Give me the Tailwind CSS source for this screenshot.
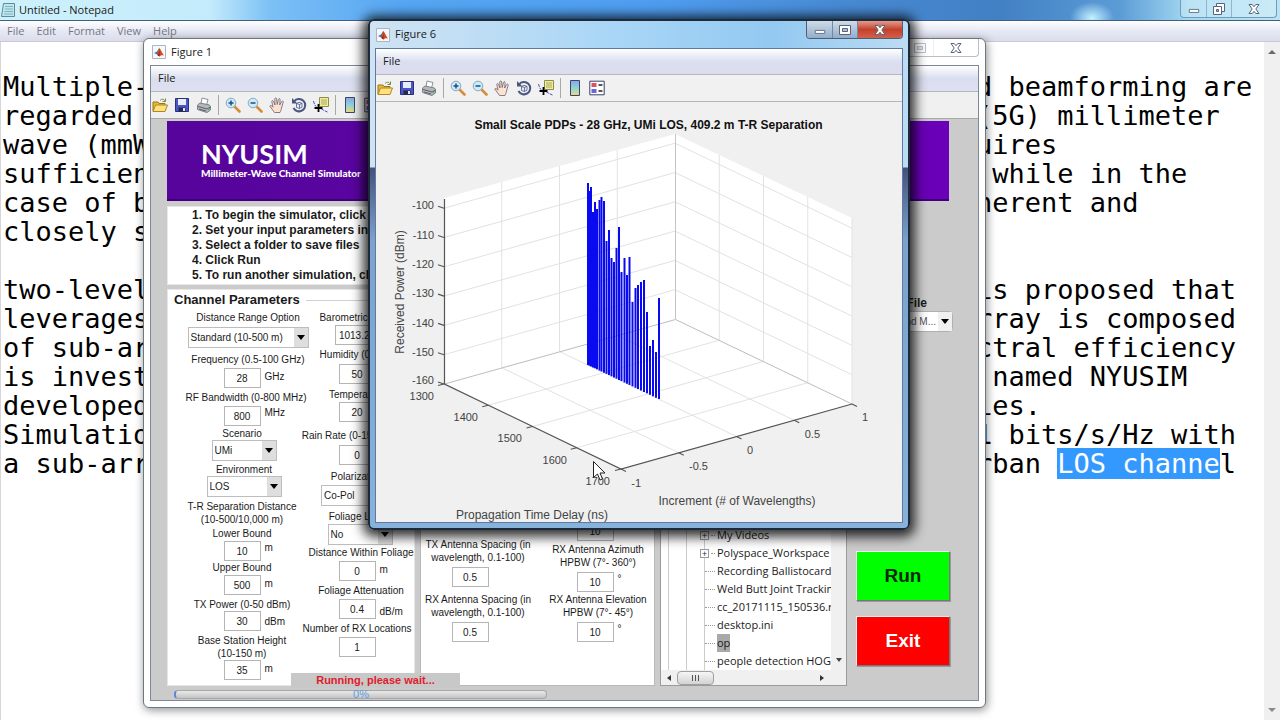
<!DOCTYPE html>
<html lang="en">
<head>
<meta charset="utf-8">
<title>Untitled - Notepad</title>
<script src="https://cdn.jsdelivr.net/npm/@tailwindcss/browser@4"></script>
</head>
<body class="h-screen overflow-hidden bg-white font-['Open_Sans',sans-serif] text-[11px] text-[#1a1a1a]">

<svg class="absolute size-0" aria-hidden="true">
  <symbol id="i-matlab" viewBox="0 0 14 14"><path d="M.5.5h13v13H.5z" fill="#f6f8fb" stroke="#a9b4c4"/><path d="M2 8l3-1.500 2.500-4L6 10z" fill="#3b77b5"/><path d="M5 9l2.500-6c1 1 2.500 5 4.500 7.500-2-.5-3-.5-4.500 1z" fill="#d8481c"/><path d="M7.500 3c0 3-.5 6-2 7.500l2 1z" fill="#8f2412"/></symbol>
  <symbol id="i-open" viewBox="0 0 16 16"><path d="M1 5h5l1 1.500h6V14H1z" fill="#e9b93c" stroke="#9c7418"/><path d="M3.500 8h12L13 14.500H1z" fill="#ffe27d" stroke="#b08620"/><path d="M8 3.500c2-2 4-1.500 5 .5M13.500 1.500v3h-3" fill="none" stroke="#6f8a4a"/></symbol>
  <symbol id="i-save" viewBox="0 0 16 16"><path d="M1.500 1.500h13v13h-13z" fill="#4b55c4" stroke="#2a2f80"/><path d="M4 2h8v6H4z" fill="#e6ecfa"/><path d="M4.500 10.500h7v4h-7z" fill="#23284f"/><path d="M9 11h2v3H9z" fill="#dfe3f4"/></symbol>
  <symbol id="i-print" viewBox="0 0 16 16"><path d="M5 7l1-6 6 1.500L10.500 8z" fill="#fff" stroke="#8b9097"/><path d="M1.500 8L4 6l9.500 2 1 2v3L11 15.500 1.500 12.500z" fill="#b4b8bd" stroke="#7d8288"/><path d="M2 9.500l9 2.500 3.500-2M3 12l7 2" fill="none" stroke="#5a5f65"/><path d="M12 12.500l1.500-1" stroke="#4fa548" stroke-width="1.500"/></symbol>
  <symbol id="i-in" viewBox="0 0 16 16"><path d="M9.500 9.500l5 5" stroke="#d98b3c" stroke-width="2.600" stroke-linecap="round"/><circle cx="6" cy="6" r="4.800" fill="#cdeaf8" stroke="#8aa9c0"/><path d="M3.500 6h5M6 3.500v5" stroke="#1d4f83" stroke-width="1.500"/></symbol>
  <symbol id="i-out" viewBox="0 0 16 16"><path d="M9.500 9.500l5 5" stroke="#d98b3c" stroke-width="2.600" stroke-linecap="round"/><circle cx="6" cy="6" r="4.800" fill="#cdeaf8" stroke="#8aa9c0"/><path d="M3.500 6h5" stroke="#1d4f83" stroke-width="1.500"/></symbol>
  <symbol id="i-hand" viewBox="0 0 16 16"><path d="M5.500 15.500C4 13 2 11 .8 9.200c.2-1.200 1.600-.9 3.200 1L2.800 4.500c.2-1.300 1.500-1.100 1.800 0L6 8 5.800 1.800c.3-1.200 1.600-1.200 1.800 0L8.200 7.500l1.300-5.300c.5-1 1.700-.7 1.600.4L10.700 8l2-3.600c.8-.8 1.700-.2 1.500.8L12.500 11c-.3 2-.8 3-1.500 4.500z" fill="#fbe3d0" stroke="#6b5f72" stroke-width=".8"/></symbol>
  <symbol id="i-rot" viewBox="0 0 16 16"><path d="M3 4.500A6.200 6.200 0 1 1 2.500 11" fill="none" stroke="#4a5680" stroke-width="2"/><path d="M1 1v5.500h5.500z" fill="#4a5680"/><path d="M5.500 6.500L8 5.300l3 1v3.800L8.500 11.500l-3-1zM5.500 6.500l3 1v4M8.500 7.500l2.500-1.200" fill="#e8ecf6" stroke="#4a578a" stroke-width=".8"/></symbol>
  <symbol id="i-cur" viewBox="0 0 16 16"><path d="M6.500.5h9v9h-9z" fill="#f0ee9c" stroke="#8f8d4c"/><path d="M8 3h6M8 5h6M8 7h6" stroke="#97955c" stroke-width=".8"/><path d="M.5 4c1 4 2 6 5 7 3 .5 5 2.500 9 4" fill="none" stroke="#4848d8" stroke-dasharray="3 1"/><path d="M5.500 7v8M1.500 11h8" stroke="#000" stroke-width="1.800"/></symbol>
  <linearGradient id="cb" x2="0" y2="1"><stop stop-color="#8fa4e6"/><stop offset=".5" stop-color="#8bd5d8"/><stop offset="1" stop-color="#f2d878"/></linearGradient>
  <symbol id="i-bar" viewBox="0 0 16 16"><path d="M3.500.5h9v15h-9z" fill="url(#cb)" stroke="#38466e"/></symbol>
  <symbol id="i-leg" viewBox="0 0 16 16"><path d="M.8 1.200h14.400v13.600H.8z" fill="#fff" stroke="#39406b"/><path d="M2.500 3h5v4h-5z" fill="#e0525a"/><path d="M2.500 9h5v4h-5z" fill="#6666e0"/><path d="M9.500 5h4M9.500 11h4" stroke="#222" stroke-width="1.300"/></symbol>
  <symbol id="i-min" viewBox="0 0 14 14"><path d="M1.500 7.500h11v3.500h-11z" fill="#fff" stroke="#59647a"/></symbol>
  <symbol id="i-max" viewBox="0 0 14 14"><path d="M1.500 2.500h11v9h-11z" fill="#fff" stroke="#59647a"/><path d="M4.500 5.500h5v3h-5z" fill="#aebfd2" stroke="#59647a"/></symbol>
  <symbol id="i-rest" viewBox="0 0 14 14"><path d="M4.500 1.500h8v8h-8z" fill="#fff" stroke="#59647a"/><path d="M1.500 4.500h8v8h-8z" fill="#fff" stroke="#59647a"/><path d="M4.500 7.500h2v2h-2z" fill="#aebfd2" stroke="#59647a"/></symbol>
  <symbol id="i-x" viewBox="0 0 14 14"><path d="M2 2.500h3.200L7 4.700l1.800-2.200H12L8.800 7 12 11.500H8.800L7 9.300l-1.800 2.200H2L5.200 7z" fill="#fff" stroke="#59647a"/></symbol>
</svg>

<!-- Notepad -->
<main class="flex h-full flex-col">
  <header class="flex h-[21px] shrink-0 items-center justify-between border-b border-[#3f5f86] bg-[radial-gradient(ellipse_22px_16px_at_1092px_18px,#c4f1ff,transparent),linear-gradient(90deg,#cdf2fc_0,#c4ebfb_210px,#7cc0f5_270px,#56a6f3_400px,#4f9df0_650px,#4789d2_850px,#4280c4_1000px,#5c9cd6_1120px,#a5daf2_1190px,#b9e4f3_100%)]">
    <div class="flex items-center gap-1 pl-px">
      <svg class="h-4 w-3.5" viewBox="0 0 14 16"><path d="M2.500 1.500h11v13h-13z" fill="#bfe6ee" stroke="#5f8c99"/><path d="M4 4.500h8M4 7h8M3.500 9.500H12M3 12h9" stroke="#7cb4c2"/></svg>
      <h1 class="text-[11px]">Untitled - Notepad</h1>
    </div>
    <div class="mr-[3px] flex h-[18px] self-start rounded-b border border-t-0 border-[#6f9cb8] bg-white/25">
      <button aria-label="Minimize" class="flex w-[26px] items-center justify-center border-r border-[#8fb6ca]"><svg class="size-3"><use href="#i-min"/></svg></button>
      <button aria-label="Restore" class="flex w-[25px] items-center justify-center border-r border-[#8fb6ca]"><svg class="size-3.5"><use href="#i-rest"/></svg></button>
      <button aria-label="Close" class="flex w-[44px] items-center justify-center"><svg class="size-3.5"><use href="#i-x"/></svg></button>
    </div>
  </header>
  <nav class="flex h-[21px] shrink-0 items-center gap-3 border-b border-[#c9c9d2] bg-linear-to-b from-white via-[#e6e9f5] to-[#dcdcec] pl-[7px] text-[#77777f]">
    <button>File</button><button>Edit</button><button>Format</button><button>View</button><button>Help</button>
  </nav>
  <div class="flex min-h-0 flex-1 border-l border-[#d5d5da]">
    <div class="flex flex-1 pt-[30px] pl-0.5 font-['DejaVu_Sans_Mono',monospace] text-[27px] leading-[29px] whitespace-pre text-black">
      <div class="w-[973px] overflow-hidden">Multiple-
regarded
wave (mmW
sufficien
case of b
closely s

two-level
leverages
of sub-ar
is invest
developed
Simulatio
a sub-arr</div>
      <div>d beamforming are
(5G) millimeter
uires
 while in the
herent and


is proposed that
rray is composed
ctral efficiency
 named NYUSIM
ies.
1 bits/s/Hz with
rban <mark class="bg-[#3399ff] text-white">LOS channe</mark>l</div>
    </div>
    <div class="flex w-4 shrink-0 flex-col items-center justify-between bg-[#f0f0f0] py-2">
      <svg class="h-1 w-2" viewBox="0 0 8 4"><path d="M4 0l4 4H0z" fill="#6a6a6a"/></svg>
      <svg class="h-1 w-2" viewBox="0 0 8 4"><path d="M4 4l4-4H0z" fill="#8a8a8a"/></svg>
    </div>
  </div>
</main>

<!-- Figure 1 -->
<section aria-label="Figure 1" class="absolute top-[38px] left-[143px] w-[843px] rounded-t-md rounded-b-md border border-[#6d7780] bg-white px-1.5 pb-1.5 shadow-[1px_2px_10px_rgba(0,0,0,0.45)]">
  <header class="flex h-[26px] items-center justify-between pl-0.5">
    <div class="flex items-center gap-[5px]"><svg class="size-3.5"><use href="#i-matlab"/></svg><h2>Figure 1</h2></div>
    <div class="flex h-[18px] self-start rounded-b border border-t-0 border-[#b9bec6]">
      <button aria-label="Minimize" class="flex w-7 items-center justify-center border-r border-[#d4d8dd] opacity-40"><svg class="size-3"><use href="#i-min"/></svg></button>
      <button aria-label="Maximize" class="flex w-7 items-center justify-center border-r border-[#d4d8dd] opacity-40"><svg class="size-3.5"><use href="#i-max"/></svg></button>
      <button aria-label="Close" class="flex w-[44px] items-center justify-center"><svg class="size-3.5"><use href="#i-x"/></svg></button>
    </div>
  </header>
  <div class="border border-[#7e8796] bg-[#cbcbcb]">
    <nav class="flex h-[26px] items-center border-b border-[#b4b6c2] bg-linear-to-b from-white via-[#d9deee] to-[#dfe0f0] pl-[7px]"><button>File</button></nav>
    <div role="toolbar" class="flex h-[27px] items-center gap-1.5 border-b border-[#a9a9a9] bg-[#f0f0f0] pl-px">
      <button aria-label="Open"><svg class="size-4"><use href="#i-open"/></svg></button>
      <button aria-label="Save"><svg class="size-4"><use href="#i-save"/></svg></button>
      <button aria-label="Print"><svg class="size-4"><use href="#i-print"/></svg></button>
      <span class="h-5 w-px bg-[#a8a8a8]"></span>
      <button aria-label="Zoom in"><svg class="size-4"><use href="#i-in"/></svg></button>
      <button aria-label="Zoom out"><svg class="size-4"><use href="#i-out"/></svg></button>
      <button aria-label="Pan"><svg class="size-4"><use href="#i-hand"/></svg></button>
      <button aria-label="Rotate"><svg class="size-4"><use href="#i-rot"/></svg></button>
      <button aria-label="Data cursor"><svg class="size-4"><use href="#i-cur"/></svg></button>
      <span class="h-5 w-px bg-[#a8a8a8]"></span>
      <button aria-label="Colorbar"><svg class="size-4"><use href="#i-bar"/></svg></button>
      <button aria-label="Legend"><svg class="size-4"><use href="#i-leg"/></svg></button>
    </div>
    <div class="pt-0.5 pr-[25px] pl-4 font-['Liberation_Sans',sans-serif]">
      <div class="mr-1 h-[80px] border-b-2 border-[#41007a] bg-linear-to-r from-[#56049b] via-[#5d05a6] to-[#6a00b8] pt-5 pl-[34px] font-['Lato',sans-serif] text-white">
        <div class="text-[27px] leading-[26px] font-bold">NYUSIM</div>
        <div class="text-[10px] leading-[13px] font-black">Millimeter-Wave Channel Simulator</div>
      </div>
      <div class="flex">
        <div class="flex w-[680px] shrink-0 flex-col">
          <ol class="mt-[5px] list-inside list-decimal border border-[#e8e8e8] bg-white py-px pl-6 text-[12px] leading-[15px] font-bold">
            <li>To begin the simulator, click Start</li>
            <li>Set your input parameters in the panels below</li>
            <li>Select a folder to save files</li>
            <li>Click Run</li>
            <li>To run another simulation, click Reset</li>
          </ol>
          <div class="mt-1 flex h-[397px] gap-[5px] text-[10px] leading-[13px]">
            <fieldset class="w-[248px] shrink-0 border border-[#e6e6e6] bg-white">
              <div class="flex items-center gap-1.5 pl-[6px]"><h3 class="text-[13px] leading-[20px] font-bold">Channel Parameters</h3><span class="h-px flex-1 bg-[#d0d0d0]"></span></div>
              <div class="flex pt-px whitespace-nowrap">
                <div class="flex w-[132px] flex-col items-center pl-4">
                  <label for="dr" class="ml-3">Distance Range Option</label>
                  <div class="relative mt-[3px] ml-3"><select id="dr" class="h-[21px] w-[121px] appearance-none border border-[#bdbdbd] bg-white pl-0.5"><option>Standard (10-500 m)</option></select><span class="pointer-events-none absolute top-px right-px flex h-[19px] w-[14px] items-center justify-center bg-[#dedede]"><svg class="h-1.5 w-2" viewBox="0 0 8 6"><path d="M0 0h8L4 5z"/></svg></span></div>
                  <label for="fr" class="mt-[5px] ml-3">Frequency (0.5-100 GHz)</label>
                  <div class="mt-0.5 grid w-full grid-cols-[1fr_37px_1fr] gap-1"><span></span><input id="fr" value="28" class="h-5 border border-[#b5b5b5] text-center"><span class="pt-0.5">GHz</span></div>
                  <label for="bw" class="mt-[3px] ml-2">RF Bandwidth (0-800 MHz)</label>
                  <div class="mt-0.5 grid w-full grid-cols-[1fr_37px_1fr] gap-1"><span></span><input id="bw" value="800" class="h-5 border border-[#b5b5b5] text-center"><span>MHz</span></div>
                  <label for="sc" class="mt-px">Scenario</label>
                  <div class="relative ml-1"><select id="sc" class="h-[21px] w-[65px] appearance-none border border-[#bdbdbd] bg-white pl-0.5"><option>UMi</option></select><span class="pointer-events-none absolute top-px right-px flex h-[19px] w-[14px] items-center justify-center bg-[#dedede]"><svg class="h-1.5 w-2" viewBox="0 0 8 6"><path d="M0 0h8L4 5z"/></svg></span></div>
                  <label for="en" class="mt-0.5 ml-1">Environment</label>
                  <div class="relative ml-1"><select id="en" class="h-[21px] w-[75px] appearance-none border border-[#bdbdbd] bg-white pl-0.5"><option>LOS</option></select><span class="pointer-events-none absolute top-px right-px flex h-[19px] w-[14px] items-center justify-center bg-[#dedede]"><svg class="h-1.5 w-2" viewBox="0 0 8 6"><path d="M0 0h8L4 5z"/></svg></span></div>
                  <p class="mt-[3px] text-center">T-R Separation Distance<br>(10-500/10,000 m)</p>
                  <label for="lb" class="mt-px">Lower Bound</label>
                  <div class="mt-px grid w-full grid-cols-[1fr_37px_1fr] gap-1"><span></span><input id="lb" value="10" class="h-5 border border-[#b5b5b5] text-center"><span>m</span></div>
                  <label for="ub">Upper Bound</label>
                  <div class="mt-px grid w-full grid-cols-[1fr_37px_1fr] gap-1"><span></span><input id="ub" value="500" class="h-5 border border-[#b5b5b5] text-center"><span class="pt-0.5">m</span></div>
                  <label for="tp" class="mt-[3px]">TX Power (0-50 dBm)</label>
                  <div class="grid w-full grid-cols-[1fr_37px_1fr] gap-1"><span></span><input id="tp" value="30" class="h-5 border border-[#b5b5b5] text-center"><span class="pt-1">dBm</span></div>
                  <label for="bh" class="mt-[3px] text-center">Base Station Height<br>(10-150 m)</label>
                  <div class="grid w-full grid-cols-[1fr_37px_1fr] gap-1"><span></span><input id="bh" value="35" class="h-5 border border-[#b5b5b5] text-center"><span class="pt-0.5">m</span></div>
                </div>
                <div class="ml-0.5 flex w-[110px] flex-col items-center">
                  <label for="bp" class="ml-4">Barometric Pressure</label>
                  <input id="bp" value="1013.25" class="mt-px h-5 w-11 border border-[#b5b5b5] text-center">
                  <label for="hu" class="mt-[3px] ml-2">Humidity (0-100%)</label>
                  <input id="hu" value="50" class="mt-[3px] h-5 w-[37px] border border-[#b5b5b5] text-center">
                  <label for="te" class="mt-1">Temperature</label>
                  <input id="te" value="20" class="mt-px h-5 w-[37px] border border-[#b5b5b5] text-center">
                  <label for="rr" class="mt-[7px]">Rain Rate (0-150 mm/hr)</label>
                  <input id="rr" value="0" class="mt-[3px] h-5 w-[37px] border border-[#b5b5b5] text-center">
                  <label for="po" class="mt-[5px]">Polarization</label>
                  <select id="po" class="mt-0.5 h-[21px] w-[72px] appearance-none border border-[#bdbdbd] bg-white pl-0.5"><option>Co-Pol</option></select>
                  <label for="fl" class="mt-1">Foliage Loss</label>
                  <div class="relative mt-px ml-1.5"><select id="fl" class="h-[21px] w-[65px] appearance-none border border-[#bdbdbd] bg-white pl-0.5"><option>No</option></select><span class="pointer-events-none absolute top-px right-px flex h-[19px] w-[14px] items-center justify-center bg-[#dedede]"><svg class="h-1.5 w-2" viewBox="0 0 8 6"><path d="M0 0h8L4 5z"/></svg></span></div>
                  <label for="df" class="mt-px ml-2">Distance Within Foliage</label>
                  <div class="mt-0.5 grid w-full grid-cols-[1fr_37px_1fr] gap-1"><span></span><input id="df" value="0" class="h-5 border border-[#b5b5b5] text-center"><span class="pt-0.5">m</span></div>
                  <label for="fa" class="mt-[3px] ml-2">Foliage Attenuation</label>
                  <div class="mt-0.5 grid w-full grid-cols-[1fr_37px_1fr] gap-1"><span></span><input id="fa" value="0.4" class="h-5 border border-[#b5b5b5] text-center"><span class="pt-1.5">dB/m</span></div>
                  <label for="nr" class="mt-[3px]">Number of RX Locations</label>
                  <input id="nr" value="1" class="mt-0.5 h-5 w-[37px] border border-[#b5b5b5] text-center">
                </div>
              </div>
            </fieldset>
            <fieldset class="w-[235px] shrink-0 border border-[#b9b9b9] bg-white">
              <div class="flex h-full items-end justify-between pr-0.5 pb-[43px] pl-0.5 whitespace-nowrap">
                <div class="flex w-[110px] flex-col items-center">
                  <label for="ts" class="text-center">TX Antenna Spacing (in<br>wavelength, 0.1-100)</label>
                  <input id="ts" value="0.5" class="mt-[3px] mr-4 h-5 w-[37px] border border-[#b5b5b5] text-center">
                  <label for="rs" class="mt-1.5 text-center">RX Antenna Spacing (in<br>wavelength, 0.1-100)</label>
                  <input id="rs" value="0.5" class="mt-[3px] mr-4 h-5 w-[37px] border border-[#b5b5b5] text-center">
                </div>
                <div class="flex w-[108px] flex-col items-center">
                  <input aria-label="TX Antenna Elevation" value="10" class="mr-1.5 h-5 w-[37px] border border-[#b5b5b5] text-center">
                  <label for="ra" class="mt-0.5 text-center">RX Antenna Azimuth<br>HPBW (7°- 360°)</label>
                  <div class="mt-[3px] mr-1.5 grid w-full grid-cols-[1fr_37px_1fr] gap-1"><span></span><input id="ra" value="10" class="h-5 border border-[#b5b5b5] text-center"><span>°</span></div>
                  <label for="re" class="mt-px text-center">RX Antenna Elevation<br>HPBW (7°- 45°)</label>
                  <div class="mt-[3px] mr-1.5 grid w-full grid-cols-[1fr_37px_1fr] gap-1"><span></span><input id="re" value="10" class="h-5 border border-[#b5b5b5] text-center"><span>°</span></div>
                </div>
              </div>
            </fieldset>
            <div class="flex min-w-0 flex-1 flex-col justify-end border border-[#9b9b9b] bg-white">
              <div class="flex">
                <ul class="min-w-0 flex-1 overflow-hidden bg-[linear-gradient(90deg,transparent_7px,#ccc_7px_8px,transparent_8px_25px,#ccc_25px_26px,transparent_26px_43px,#ccc_43px_44px,transparent_44px)] font-['Open_Sans',sans-serif] text-[11px] leading-[18px] whitespace-nowrap">
                  <li class="flex items-center gap-0.5 pl-[39px]"><span class="flex size-[9px] items-center justify-center border border-[#999] bg-white text-[9px] leading-none">+</span><span class="w-1 border-t border-dotted border-[#999]"></span>My Videos</li>
                  <li class="flex items-center gap-0.5 pl-[39px]"><span class="flex size-[9px] items-center justify-center border border-[#999] bg-white text-[9px] leading-none">+</span><span class="w-1 border-t border-dotted border-[#999]"></span>Polyspace_Workspace</li>
                  <li class="flex items-center gap-0.5 pl-[44px]"><span class="w-2.5 shrink-0 border-t border-dotted border-[#999]"></span>Recording Ballistocardiogram</li>
                  <li class="flex items-center gap-0.5 pl-[44px]"><span class="w-2.5 shrink-0 border-t border-dotted border-[#999]"></span>Weld Butt Joint Tracking</li>
                  <li class="flex items-center gap-0.5 pl-[44px]"><span class="w-2.5 shrink-0 border-t border-dotted border-[#999]"></span>cc_20171115_150536.reg</li>
                  <li class="flex items-center gap-0.5 pl-[44px]"><span class="w-2.5 border-t border-dotted border-[#999]"></span>desktop.ini</li>
                  <li class="flex items-center gap-0.5 pl-[44px]"><span class="w-2.5 border-t border-dotted border-[#999]"></span><span class="bg-[#a9a9a9]">op</span></li>
                  <li class="flex items-center gap-0.5 pl-[44px]"><span class="w-2.5 shrink-0 border-t border-dotted border-[#999]"></span>people detection HOG-SVM</li>
                </ul>
                <div class="flex w-[15px] items-end justify-center bg-[#f0f0f0] pb-2"><svg class="h-1 w-1.5" viewBox="0 0 6 4"><path d="M0 0h6L3 4z" fill="#444"/></svg></div>
              </div>
              <div class="flex h-[15px] items-center bg-[#f0f0f0] pl-1.5">
                <svg class="h-1.5 w-1" viewBox="0 0 4 6"><path d="M4 0v6L0 3z" fill="#333"/></svg>
                <span class="ml-1.5 flex h-[14px] w-[37px] items-center justify-center gap-0.5 rounded-sm border border-[#a0a0a0] bg-linear-to-b from-[#f6f6f6] to-[#d3d3d3]"><i class="h-1.5 w-px bg-[#555]"></i><i class="h-1.5 w-px bg-[#555]"></i><i class="h-1.5 w-px bg-[#555]"></i></span>
                <svg class="mr-[22px] ml-auto h-1.5 w-1" viewBox="0 0 4 6"><path d="M0 0v6l4-3z" fill="#333"/></svg>
              </div>
            </div>
          </div>
        </div>
        <div class="flex min-w-0 flex-1 flex-col items-end pt-[94px]">
          <label for="of" class="mr-[26px] text-[12px] leading-[16px] font-bold">Output File</label>
          <div class="relative"><select id="of" class="h-[21px] w-[97px] appearance-none rounded-sm border border-[#b0b0b0] bg-white pr-4 text-right text-[10px] text-[#555]"><option>Text and M...</option></select><span class="pointer-events-none absolute top-px right-px flex h-[19px] w-[14px] items-center justify-center bg-[#f0f0f0]"><svg class="h-1.5 w-2" viewBox="0 0 8 6"><path d="M0 0h8L4 5z"/></svg></span></div>
          <button class="mt-[219px] mr-[3px] h-[50px] w-[94px] border border-t-[#eee] border-r-[#777] border-b-[#777] border-l-[#eee] bg-[#00ff00] text-[19px] font-bold text-[#0a2a0a] shadow-[1px_1px_0_#999]">Run</button>
          <button class="mt-[15px] mr-[3px] h-[50px] w-[94px] border border-t-[#eee] border-r-[#777] border-b-[#777] border-l-[#eee] bg-[#ff0000] text-[19px] font-bold text-white shadow-[1px_1px_0_#999]">Exit</button>
        </div>
      </div>
      <div class="relative ml-[7px] h-[14px] pt-1">
        <div class="absolute -top-[13px] left-[117px] w-[169px] bg-[#c8c8c8] text-center text-[11px] leading-[15px] font-bold text-[#e01b2c]">Running, please wait...</div>
        <div role="progressbar" aria-valuenow="0" aria-label="Progress" class="flex h-[9px] w-[373px] items-center justify-center rounded-sm border border-l-2 border-[#a6a6a6] border-l-[#5f86d8] bg-linear-to-b from-[#e9e9e9] to-[#c4c4c4] text-[11px] leading-none text-[#5b9fe0]">0%</div>
      </div>
    </div>
  </div>
</section>

<!-- Figure 6 -->
<section aria-label="Figure 6" class="absolute top-[19px] left-[368px] w-[542px] rounded-md border-2 border-[#1d2a3a] bg-[linear-gradient(180deg,transparent_0_146px,#46507f_147px,#7ba3cc_220px,#86b2dc_100%),linear-gradient(90deg,#cfe3f3,#a9d6f6_45%,#93c9f1_75%,#bcdcf3)] px-[5px] pb-[5px] shadow-[0_2px_12px_5px_rgba(0,0,0,0.8)]">
  <header class="flex h-[27px] items-center justify-between pl-px">
    <div class="flex items-center gap-[5px]"><svg class="size-3.5"><use href="#i-matlab"/></svg><h2>Figure 6</h2></div>
    <div class="flex h-[18px] self-start overflow-hidden rounded-b border border-t-0 border-[#4d5f78]">
      <button aria-label="Minimize" class="flex w-[26px] items-center justify-center border-r border-[#7288a3] bg-linear-to-b from-[#cfdbe8] to-[#92aecb]"><svg class="size-3"><use href="#i-min"/></svg></button>
      <button aria-label="Maximize" class="flex w-[25px] items-center justify-center border-r border-[#7288a3] bg-linear-to-b from-[#cfdbe8] to-[#92aecb]"><svg class="size-3.5"><use href="#i-max"/></svg></button>
      <button aria-label="Close" class="flex w-[44px] items-center justify-center bg-linear-to-b from-[#e39a8c] via-[#c3402c] to-[#d4604a]"><svg class="size-3.5"><use href="#i-x"/></svg></button>
    </div>
  </header>
  <div class="border border-[#5f7a9c] bg-[#f0f0f0]">
    <nav class="flex h-[26px] items-center border-b border-[#b4b6c2] bg-linear-to-b from-white via-[#dbdff0] to-[#dcdcee] pl-[7px]"><button>File</button></nav>
    <div role="toolbar" class="flex h-[27px] items-center gap-1.5 border-b border-[#b5b5b5] bg-[#f1f1f1] pl-px">
      <button aria-label="Open"><svg class="size-4"><use href="#i-open"/></svg></button>
      <button aria-label="Save"><svg class="size-4"><use href="#i-save"/></svg></button>
      <button aria-label="Print"><svg class="size-4"><use href="#i-print"/></svg></button>
      <span class="h-5 w-px bg-[#a8a8a8]"></span>
      <button aria-label="Zoom in"><svg class="size-4"><use href="#i-in"/></svg></button>
      <button aria-label="Zoom out"><svg class="size-4"><use href="#i-out"/></svg></button>
      <button aria-label="Pan"><svg class="size-4"><use href="#i-hand"/></svg></button>
      <button aria-label="Rotate"><svg class="size-4"><use href="#i-rot"/></svg></button>
      <button aria-label="Data cursor"><svg class="size-4"><use href="#i-cur"/></svg></button>
      <span class="h-5 w-px bg-[#a8a8a8]"></span>
      <button aria-label="Colorbar"><svg class="size-4"><use href="#i-bar"/></svg></button>
      <button aria-label="Legend"><svg class="size-4"><use href="#i-leg"/></svg></button>
    </div>
    <svg id="plot" class="block w-full font-['Liberation_Sans',sans-serif]" viewBox="376 102 526 420">
      <path d="M444 198L675 134L852 218V404L621 469L444 384z" fill="#fff"/>
      <g id="grid" stroke="#e2e2e2" fill="none"></g>
      <path d="M444.500 384L675.500 319.500L852 404" stroke="#bdbdbd" fill="none"/>
      <path d="M675.500 134V319" stroke="#c4c4c4"/>
      <g id="bars" stroke="#0a0af0" stroke-width="2"></g>
      <path d="M444.500 199V384L621 469L852 404" stroke="#555" stroke-width="1.200" fill="none"/>
      <g id="ticks" stroke="#555" stroke-width="1.200"></g>
      <text x="648.500" y="129" text-anchor="middle" font-size="12" font-weight="bold" fill="#111">Small Scale PDPs - 28 GHz, UMi LOS, 409.2 m T-R Separation</text>
      <g font-size="12" fill="#444" text-anchor="middle">
        <text x="737" y="505">Increment (# of Wavelengths)</text>
        <text x="532" y="519">Propagation Time Delay (ns)</text>
        <text transform="translate(404 292) rotate(-90)">Received Power (dBm)</text>
      </g>
      <g font-size="11" fill="#444" text-anchor="end">
        <text x="434" y="209">-100</text><text x="434" y="239">-110</text><text x="434" y="268">-120</text><text x="434" y="297">-130</text><text x="434" y="327">-140</text><text x="434" y="356">-150</text><text x="434" y="384">-160</text>
        <text x="434" y="400">1300</text><text x="478" y="421">1400</text><text x="522" y="442">1500</text><text x="567" y="464">1600</text><text x="610" y="485">1700</text>
        <text x="641" y="487">-1</text><text x="708" y="470">-0.5</text><text x="753" y="454">0</text><text x="820" y="438">0.5</text><text x="868" y="421">1</text>
      </g>
      <path d="M593.500 461.500v16l4-3.500 2.500 6 2.500-1-2.500-6h5z" fill="#fff" stroke="#222"/>
    </svg>
  </div>
</section>

<script>
  const line = (id, x1, y1, x2, y2) => {
    const l = document.createElementNS("http://www.w3.org/2000/svg", "line");
    Object.entries({x1, y1, x2, y2}).forEach(([k, v]) => l.setAttribute(k, v));
    document.getElementById(id).append(l);
  };
  for (let k = 0; k < 7; k++) {
    const y = 384 - k * 29.3;
    if (k) { line("grid", 444, y, 675, y - 65); line("grid", 675, y - 65, 852, y + 20); }
    line("ticks", 438, y - 2, 444, y);
  }
  for (let k = 1; k < 4; k++) {
    const a = k * 57.75, b = k * 16.25, c = k * 44.25, d = k * 21.25;
    line("grid", 444 + a, 384 - b, 444 + a, 198 - k * 16);
    line("grid", 675 + c, 319 + d, 675 + c, 134 + k * 21);
    line("grid", 444 + a, 384 - b, 621 + a, 469 - b);
    line("grid", 444 + c, 384 + d, 675 + c, 319 + d);
  }
  line("grid", 852, 218, 852, 404);
  for (let k = 0; k < 5; k++) {
    const x = 444 + k * 44.25, y = 384 + k * 21.25;
    line("ticks", x - 6, y + 1.5, x, y);
    const u = 621 + k * 57.75, v = 469 - k * 16.25;
    line("ticks", u, v, u + 5, v + 2.5);
  }
  [[588,183],[589.5,191],[591,187],[593,212],[595,202],[597,209],[599.5,200],[601.5,197],[604,201],[606.5,241],[609,230],[611.5,258],[614,262],[616.5,248],[619,227],[621.5,272],[624.5,258],[627,275],[629.5,257],[632.5,302],[635.5,288],[638,285],[641,282],[644,280],[647,312],[650,346],[653,340],[656,352],[659,298]]
    .forEach(([x, y]) => line("bars", x, y, x, 365 + (x - 588) * 0.48));
</script>
</body>
</html>
